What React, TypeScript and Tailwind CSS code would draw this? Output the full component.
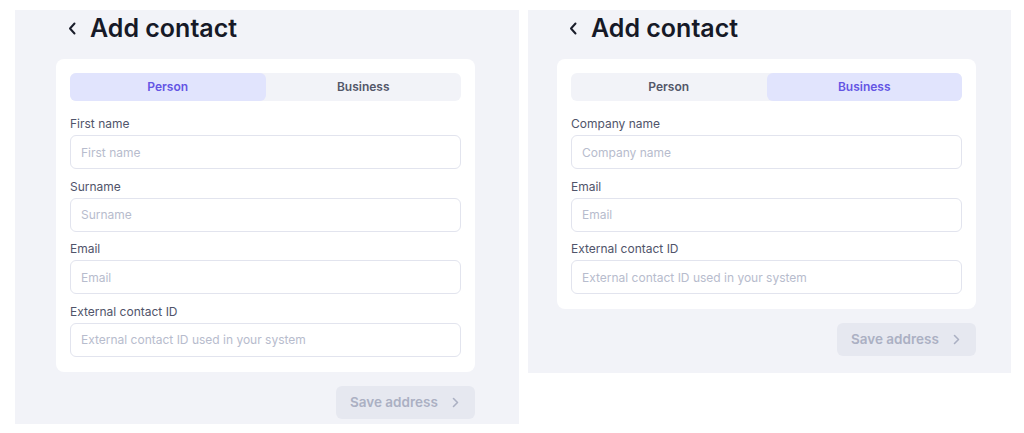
import { useState } from "react";

type Mode = "person" | "business";

type Field = {
  label: string;
  placeholder: string;
};

const personFields: Field[] = [
  { label: "First name", placeholder: "First name" },
  { label: "Surname", placeholder: "Surname" },
  { label: "Email", placeholder: "Email" },
  { label: "External contact ID", placeholder: "External contact ID used in your system" }
];

const businessFields: Field[] = [
  { label: "Company name", placeholder: "Company name" },
  { label: "Email", placeholder: "Email" },
  { label: "External contact ID", placeholder: "External contact ID used in your system" }
];

function BackChevron() {
  return (
    <svg width="9" height="13" viewBox="0 0 9 13" fill="none" aria-hidden="true">
      <path d="M6.5 1.5L2 6.5l4.5 5" stroke="#1a1d2b" strokeWidth="2" strokeLinecap="round" strokeLinejoin="round" />
    </svg>
  );
}

function AddContactPanel({ initialMode, className }: { initialMode: Mode; className: string }) {
  const [mode, setMode] = useState<Mode>(initialMode);
  const fields = mode === "person" ? personFields : businessFields;

  return (
    <section className={`flex flex-col bg-[#f2f3f8] ${className}`}>
      <div className="flex h-[30px] items-center">
        <button type="button" className="ml-[12px] mr-[13px] flex h-[30px] items-center" aria-label="Back">
          <BackChevron />
        </button>
        <h1 className="text-[25px] leading-[30px] font-semibold text-[#161927]">Add contact</h1>
      </div>

      <div className="mt-[16px] w-[419px] rounded-lg bg-white px-[14px] pt-[14px] pb-[15px]">
        <div className="grid h-[28px] grid-cols-2 rounded-md bg-[#f2f3f8]">
          <button
            type="button"
            onClick={() => setMode("person")}
            className={`rounded-md text-[12px] font-semibold ${mode === "person" ? "bg-[#e1e4fd] text-[#6455e4]" : "text-[#535769]"}`}
          >
            Person
          </button>
          <button
            type="button"
            onClick={() => setMode("business")}
            className={`rounded-md text-[12px] font-semibold ${mode === "business" ? "bg-[#e1e4fd] text-[#6455e4]" : "text-[#535769]"}`}
          >
            Business
          </button>
        </div>

        <div className="mt-[13px] flex flex-col gap-[7.5px]">
          {fields.map((field) => (
            <label key={field.label} className="flex flex-col">
              <span className="mb-[1px] text-[12px] leading-[20px] text-[#50546a]">{field.label}</span>
              <input
                className="h-[34px] rounded-md border border-[#e2e4ee] bg-white px-[10px] text-[12px] text-[#161927] outline-none placeholder:text-[#b7bccd]"
                placeholder={field.placeholder}
              />
            </label>
          ))}
        </div>
      </div>

      <div className="mt-[14px] flex w-[419px] justify-end">
        <button
          type="button"
          disabled
          className="flex h-[33px] w-[139px] items-center rounded-md bg-[#e6e8f0] pl-[14px] text-[13.5px] font-semibold text-[#abb0c3]"
        >
          Save address
          <svg className="ml-[14px]" width="7" height="11" viewBox="0 0 7 11" fill="none" aria-hidden="true">
            <path d="M1.5 1.5l4 4-4 4" stroke="#abb0c3" strokeWidth="1.6" strokeLinecap="round" strokeLinejoin="round" />
          </svg>
        </button>
      </div>
    </section>
  );
}

export default function App() {
  return (
    <div className="flex h-[433px] w-[1024px] items-start bg-white font-['Inter',sans-serif]">
      <AddContactPanel initialMode="person" className="mt-[10px] ml-[15px] h-[414px] w-[504px] pt-[3px] pl-[41px]" />
      <AddContactPanel initialMode="business" className="mt-[10px] ml-[9px] h-[363px] w-[483px] pt-[3px] pl-[29px]" />
    </div>
  );
}
